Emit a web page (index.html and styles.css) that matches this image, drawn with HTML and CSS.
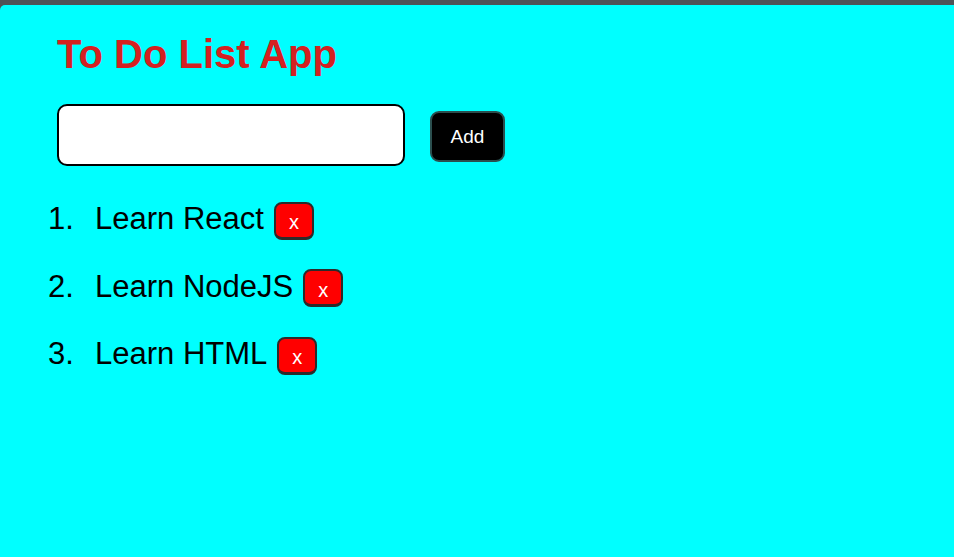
FILE: index.html
```html
<!DOCTYPE html>
<html lang="en">
<head>
<meta charset="utf-8">
<title>To Do List App</title>
<link rel="stylesheet" href="styles.css">
</head>
<body>
<div class="frame">
  <div class="app">
    <h1 class="title">To Do List App</h1>
    <form class="add-form" onsubmit="return false">
      <input class="todo-input" type="text" aria-label="New task">
      <button class="add-btn" type="submit">Add</button>
    </form>
    <ol class="todo-list">
      <li class="todo-item"><span class="todo-text">Learn React</span><button class="del-btn" type="button">x</button></li>
      <li class="todo-item"><span class="todo-text">Learn NodeJS</span><button class="del-btn" type="button">x</button></li>
      <li class="todo-item"><span class="todo-text">Learn HTML</span><button class="del-btn" type="button">x</button></li>
    </ol>
  </div>
</div>
</body>
</html>
```
FILE: styles.css
```css
html, body {
  margin: 0;
  padding: 0;
  height: 100%;
}

body {
  background: #4f5357;
  font-family: "Liberation Sans", Arial, sans-serif;
}

.frame {
  height: 100%;
  padding-top: 5px;
  box-sizing: border-box;
}

.app {
  height: 100%;
  background: #00ffff;
  border-top-left-radius: 5px;
  padding: 26px 0 0 57px;
  box-sizing: border-box;
}

.title {
  margin: 0;
  font-size: 40px;
  font-weight: bold;
  color: #d42020;
  line-height: 46px;
}

.add-form {
  display: flex;
  align-items: center;
  gap: 25px;
  margin-top: 27px;
}

.todo-input {
  width: 348px;
  height: 62px;
  box-sizing: border-box;
  border: 2px solid #000;
  border-radius: 10px;
  background: #fff;
  font-family: inherit;
  font-size: 20px;
  padding: 0 10px;
  margin: 0;
}

.add-btn {
  width: 75px;
  height: 51px;
  box-sizing: border-box;
  background: #000;
  color: #fff;
  border: 2px solid #2b4f4f;
  border-radius: 9px;
  font-family: inherit;
  font-size: 19px;
  margin-top: 3px;
  padding: 0;
}

.todo-list {
  list-style: none;
  margin: 35px 0 0 -9px;
  padding: 0;
  counter-reset: item;
  display: flex;
  flex-direction: column;
  gap: 29px;
}

.todo-item {
  counter-increment: item;
  display: flex;
  align-items: baseline;
  font-size: 31px;
  color: #000;
}

.todo-item::before {
  content: counter(item) ".";
  display: inline-block;
  width: 47px;
}

.todo-text {
  margin-right: 10px;
}

.del-btn {
  width: 40px;
  height: 38px;
  box-sizing: border-box;
  background: #ff0000;
  color: #fff;
  border: 2px solid #2b2b2b;
  border-bottom-width: 3px;
  border-radius: 8px;
  font-family: inherit;
  font-size: 20px;
  padding: 7px 0 2px;
  line-height: 23px;
}
```
